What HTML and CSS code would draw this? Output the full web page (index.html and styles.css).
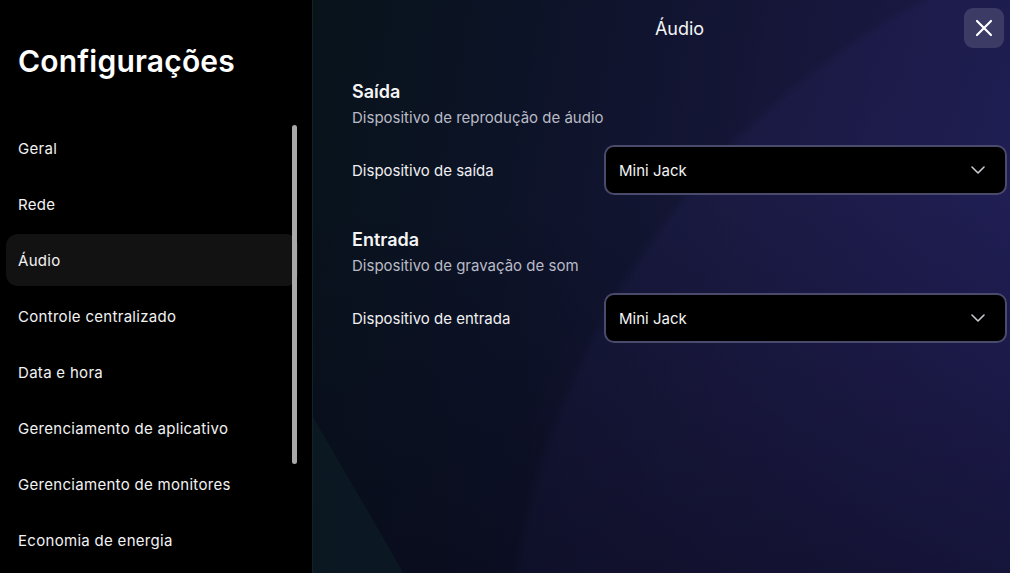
FILE: index.html
```html
<!DOCTYPE html>
<html lang="pt-BR">
<head>
<meta charset="utf-8">
<title>Configurações</title>
<link rel="stylesheet" href="styles.css">
</head>
<body>
<div class="app">
  <aside class="sidebar">
    <h1 class="title">Configurações</h1>
    <nav class="nav">
      <div class="nav-item">Geral</div>
      <div class="nav-item">Rede</div>
      <div class="nav-item active">Áudio</div>
      <div class="nav-item">Controle centralizado</div>
      <div class="nav-item">Data e hora</div>
      <div class="nav-item">Gerenciamento de aplicativo</div>
      <div class="nav-item">Gerenciamento de monitores</div>
      <div class="nav-item">Economia de energia</div>
    </nav>
    <div class="scrollbar"></div>
  </aside>
  <main class="panel">
    <header class="panel-header">Áudio</header>
    <button class="close" aria-label="Fechar">
      <svg width="18" height="18" viewBox="0 0 18 18"><path d="M2 2 L16 16 M16 2 L2 16" stroke="#fff" stroke-width="2.2" stroke-linecap="round" fill="none"/></svg>
    </button>
    <section class="section">
      <h2 class="section-title">Saída</h2>
      <p class="section-sub">Dispositivo de reprodução de áudio</p>
      <div class="row">
        <span class="row-label">Dispositivo de saída</span>
        <div class="select">
          <span>Mini Jack</span>
          <svg class="chev" width="14" height="8" viewBox="0 0 14 8"><path d="M1 1 L7 7 L13 1" stroke="#c8c8d0" stroke-width="1.6" fill="none" stroke-linecap="round" stroke-linejoin="round"/></svg>
        </div>
      </div>
    </section>
    <section class="section">
      <h2 class="section-title">Entrada</h2>
      <p class="section-sub">Dispositivo de gravação de som</p>
      <div class="row">
        <span class="row-label">Dispositivo de entrada</span>
        <div class="select">
          <span>Mini Jack</span>
          <svg class="chev" width="14" height="8" viewBox="0 0 14 8"><path d="M1 1 L7 7 L13 1" stroke="#c8c8d0" stroke-width="1.6" fill="none" stroke-linecap="round" stroke-linejoin="round"/></svg>
        </div>
      </div>
    </section>
  </main>
</div>
</body>
</html>
```
FILE: styles.css
```css
* { box-sizing: border-box; }
html, body { margin: 0; padding: 0; }
body {
  width: 1010px;
  height: 573px;
  overflow: hidden;
  font-family: Inter, "Noto Sans", "Liberation Sans", sans-serif;
  color: #fff;
  background: #000;
}
.app { display: flex; width: 1010px; height: 573px; }

.sidebar {
  width: 312px;
  flex: none;
  background: #000;
  position: relative;
  padding-top: 43px;
}
.title {
  margin: 0 0 43px 18px;
  font-size: 30px;
  line-height: 36px;
  font-weight: 600;
  letter-spacing: 0.2px;
}
.nav { display: flex; flex-direction: column; gap: 4px; }
.nav-item {
  margin-left: 6px;
  width: 292px;
  height: 52px;
  display: flex;
  align-items: center;
  padding-left: 12px;
  border-radius: 12px;
  font-size: 15px;
  letter-spacing: 0.3px;
  color: #f2f2f2;
}
.nav-item.active { background: #121212; }
.scrollbar {
  position: absolute;
  left: 292px;
  top: 125px;
  width: 5px;
  height: 339px;
  border-radius: 3px;
  background: #a9a9a9;
}

.panel {
  flex: 1;
  position: relative;
  border-left: 1px solid #0f2328;
  padding: 0 3px 0 39px;
  background:
    linear-gradient(to top right, rgba(16, 46, 48, 0.3) 50%, rgba(0,0,0,0) 50.5%) left bottom / 90px 155px no-repeat,
    linear-gradient(to bottom, rgba(6, 6, 20, 0) 35%, rgba(6, 6, 20, 0.45) 100%),
    radial-gradient(circle at 988px 700px, rgba(60, 55, 140, 0.22) 0, rgba(50, 45, 120, 0.16) 790px, rgba(0,0,0,0) 800px),
    linear-gradient(100deg, #08131a 0%, #0d1328 30%, #161639 60%, #1c1b4e 100%);
}
.panel-header {
  height: 56px;
  display: flex;
  align-items: center;
  justify-content: center;
  font-size: 18px;
  color: #f4f4f6;
}
.close {
  position: absolute;
  right: 6px;
  top: 8px;
  width: 40px;
  height: 40px;
  border: none;
  border-radius: 9px;
  background: #3b3b66;
  display: flex;
  align-items: center;
  justify-content: center;
  padding: 0;
}

.section { padding-top: 24px; }
.section + .section { padding-top: 33px; }
.section-title {
  margin: 0;
  font-size: 18px;
  line-height: 24px;
  font-weight: 600;
  color: #f5f5f5;
}
.section-sub {
  margin: 4px 0 17px;
  font-size: 15px;
  line-height: 20px;
  color: #b9bbc6;
}
.row {
  display: grid;
  grid-template-columns: 252px 1fr;
  align-items: center;
  height: 50px;
}
.row-label { font-size: 15px; color: #f0f0f2; }
.select {
  height: 50px;
  border: 2px solid #4a4a6c;
  border-radius: 10px;
  background: #000;
  display: flex;
  align-items: center;
  justify-content: space-between;
  padding: 0 20px 0 13px;
  font-size: 15px;
  color: #f4f4f4;
}
.chev { display: block; }
```
